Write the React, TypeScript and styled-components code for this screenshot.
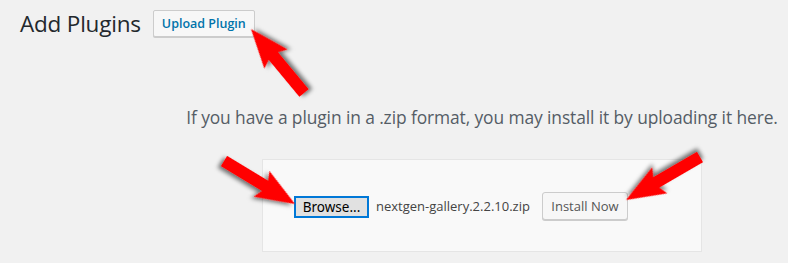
import React from 'react';
import styled, { createGlobalStyle } from 'styled-components';

const GlobalStyle = createGlobalStyle`
  html, body {
    margin: 0;
    padding: 0;
    background: #f1f1f1;
  }
  body {
    width: 788px;
    height: 263px;
    overflow: hidden;
    font-family: "Open Sans", "Noto Sans", sans-serif;
  }
`;

const Page = styled.div`
  position: relative;
  width: 788px;
  height: 263px;
  box-sizing: border-box;
  padding: 10px 0 0 20px;
`;

const Header = styled.div`
  display: flex;
  align-items: center;
  gap: 12px;
  height: 27px;
`;

const Title = styled.h1`
  margin: 0;
  font-size: 22.5px;
  font-weight: 400;
  color: #23282d;
  line-height: 27px;
  letter-spacing: -0.2px;
`;

const TitleAction = styled.button`
  box-sizing: border-box;
  height: 27px;
  padding: 0 8px;
  border: 1px solid #ccc;
  border-radius: 2px;
  background: #f7f7f7;
  color: #0073aa;
  font-family: inherit;
  font-size: 12.5px;
  font-weight: 600;
  box-shadow: 0 1px 0 #ccc;
`;

const UploadSection = styled.div`
  margin-left: 156px;
  display: flex;
  flex-direction: column;
  align-items: center;
`;

const Help = styled.p`
  margin: 68px 0 0;
  font-size: 17.4px;
  line-height: 24px;
  color: #555d66;
  white-space: nowrap;
  letter-spacing: -0.1px;
`;

const UploadForm = styled.div`
  box-sizing: border-box;
  width: 440px;
  height: 93px;
  margin-top: 30px;
  padding: 0 31px;
  border: 1px solid #e5e5e5;
  background: #f9f9f9;
  display: flex;
  align-items: center;
`;

const Browse = styled.button`
  box-sizing: border-box;
  width: 75px;
  height: 22px;
  margin-top: 2px;
  padding: 0;
  border: 2px solid #0078d7;
  background: #e1e1e1;
  color: #000;
  font-family: "Noto Sans", sans-serif;
  font-size: 13.5px;
  line-height: 18px;
`;

const FileName = styled.span`
  margin-left: 7px;
  font-size: 13px;
  color: #444;
  white-space: nowrap;
`;

const Install = styled.button`
  box-sizing: border-box;
  width: 86px;
  height: 28px;
  margin-left: 12px;
  padding: 0;
  border: 1px solid #ccc;
  border-radius: 3px;
  background: #f7f7f7;
  color: #555;
  font-family: inherit;
  font-size: 13px;
  box-shadow: 0 1px 0 #ccc;
`;

const Overlay = styled.svg`
  position: absolute;
  left: 0;
  top: 0;
  pointer-events: none;
`;

type ArrowProps = { from: [number, number]; to: [number, number] };

const Arrow: React.FC<ArrowProps> = ({ from, to }) => {
  const dx = to[0] - from[0];
  const dy = to[1] - from[1];
  const len = Math.sqrt(dx * dx + dy * dy);
  const angle = (Math.atan2(dy, dx) * 180) / Math.PI;
  const head = 35;
  const shaft = 6;
  const wing = 15;
  const pts = [
    [0, -shaft],
    [len - head, -shaft],
    [len - head - 4, -wing],
    [len, 0],
    [len - head - 4, wing],
    [len - head, shaft],
    [0, shaft],
  ]
    .map((p) => p.join(','))
    .join(' ');
  return (
    <polygon
      points={pts}
      fill="#ff0000"
      filter="url(#arrowShadow)"
      transform={`translate(${from[0]} ${from[1]}) rotate(${angle})`}
    />
  );
};

const App: React.FC = () => (
  <>
    <GlobalStyle />
    <Page>
      <Header>
        <Title>Add Plugins</Title>
        <TitleAction>Upload Plugin</TitleAction>
      </Header>
      <UploadSection>
        <Help>If you have a plugin in a .zip format, you may install it by uploading it here.</Help>
        <UploadForm>
          <Browse>Browse...</Browse>
          <FileName>nextgen-gallery.2.2.10.zip</FileName>
          <Install>Install Now</Install>
        </UploadForm>
      </UploadSection>
      <Overlay width="788" height="263" viewBox="0 0 788 263">
        <defs>
          <filter id="arrowShadow" x="-30%" y="-30%" width="160%" height="160%">
            <feDropShadow dx="-2" dy="3" stdDeviation="2" floodColor="#000" floodOpacity="0.55" />
          </filter>
        </defs>
        <Arrow from={[304, 93]} to={[251, 29]} />
        <Arrow from={[224, 161]} to={[295, 204]} />
        <Arrow from={[700, 157]} to={[626, 200]} />
      </Overlay>
    </Page>
  </>
);

export default App;
